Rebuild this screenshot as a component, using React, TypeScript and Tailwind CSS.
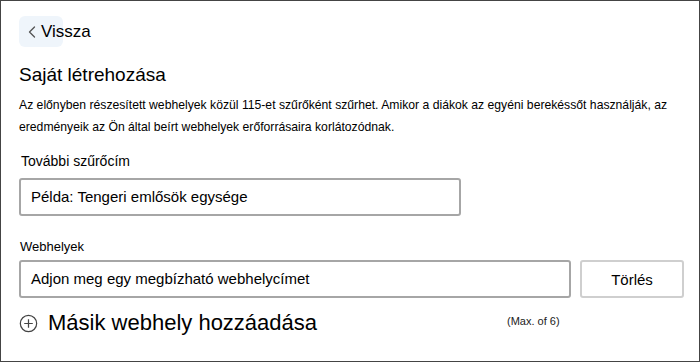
import { ChevronLeft } from 'lucide-react'

export default function App() {
  return (
    <div className="w-[700px] h-[362px] bg-white border border-[#444444] font-['Liberation_Sans',Arial,sans-serif] text-black overflow-hidden">
      <div className="pl-[18px] pt-[15px]">
        {/* Back */}
        <div className="flex items-center h-[31px]">
          <div className="flex items-center h-[31px] w-[44px] rounded-md bg-[#eff5fb] pl-[3px]">
            <ChevronLeft size={20} strokeWidth={1.6} className="text-[#555555]" />
          </div>
          <span className="-ml-[22px] text-[17px]">Vissza</span>
        </div>

        <h1 className="mt-[16px] text-[19px] leading-[24px]">Saját létrehozása</h1>

        <p className="mt-[7px] text-[12.2px] leading-[22px] pr-[20px]">
          Az előnyben részesített webhelyek közül 115-et szűrőként szűrhet. Amikor a diákok az egyéni berekéssőt használják, az
          eredményeik az Ön által beírt webhelyek erőforrásaira korlátozódnak.
        </p>

        {/* Title field */}
        <div className="mt-[14px] pl-[2px] text-[14px] leading-[18px]">További szűrőcím</div>
        <div className="mt-[8px] w-[442px] h-[38px] flex items-center rounded-[3px] border-2 border-[#a6a6a6] pl-[10px] text-[15px]">
          Példa: Tengeri emlősök egysége
        </div>

        {/* Sites */}
        <div className="mt-[22px] pl-[1px] text-[13px] leading-[18px]">Webhelyek</div>
        <div className="mt-[4px] flex gap-[9px]">
          <div className="w-[552px] h-[38px] flex items-center rounded-[3px] border-2 border-[#a6a6a6] pl-[10px] text-[15px]">
            Adjon meg egy megbízható webhelycímet
          </div>
          <div className="w-[104px] h-[38px] flex items-center justify-center rounded-[3px] border-2 border-[#cfcfcf] text-[15px] pt-[3px]">
            Törlés
          </div>
        </div>

        <div className="mt-[12px] flex items-center">
          <svg width="19" height="19" viewBox="0 0 20 20" fill="none" stroke="#444444" strokeWidth="1.3">
            <circle cx="10" cy="10" r="8.6" />
            <path d="M10 5.5v9M5.5 10h9" />
          </svg>
          <span className="ml-[10px] text-[22px] leading-[26px]">Másik webhely hozzáadása</span>
          <span className="ml-[190px] text-[11px] text-[#222222] -mt-[4px]">(Max. of 6)</span>
        </div>
      </div>
    </div>
  )
}
